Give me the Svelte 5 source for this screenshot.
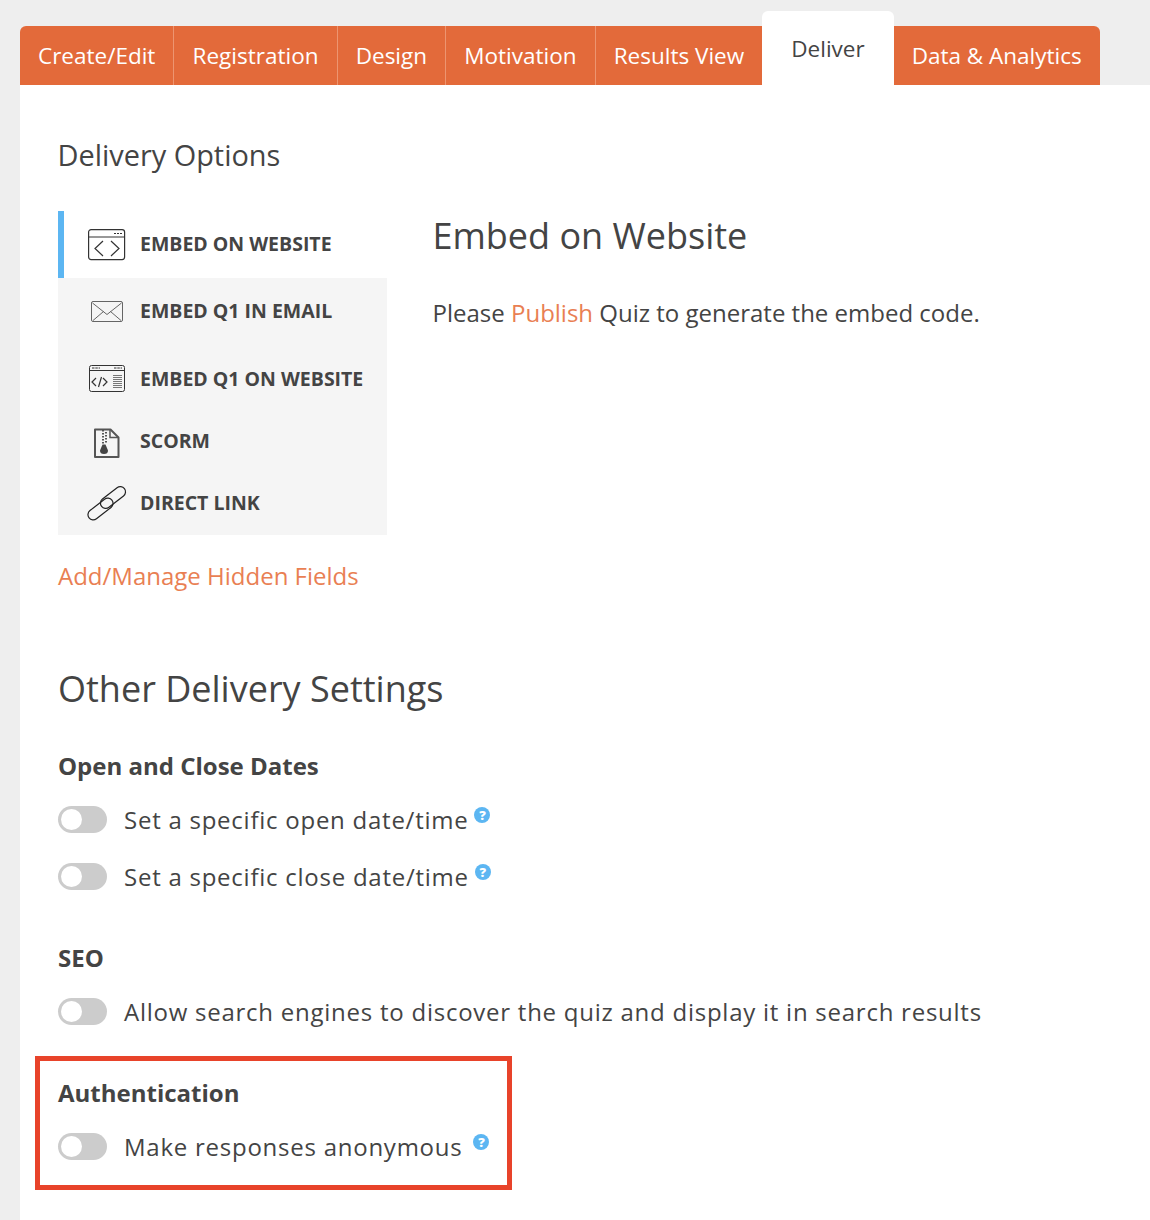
<script>
	const tabs = [
		{ label: 'Create/Edit' },
		{ label: 'Registration' },
		{ label: 'Design' },
		{ label: 'Motivation' },
		{ label: 'Results View' },
		{ label: 'Deliver', active: true },
		{ label: 'Data & Analytics' }
	];
</script>

<div class="page">
	<nav class="tabs">
		{#each tabs as tab}
			<div class="tab" class:active={tab.active}>{tab.label}</div>
		{/each}
	</nav>

	<main class="content">
		<h2 class="options-title">Delivery Options</h2>

		<div class="options">
			<div class="side">
				<ul class="menu">
					<li class="item selected">
						<span class="icon">
							<svg width="38" height="32" viewBox="0 0 38 32" fill="none" stroke="#333" stroke-width="1.2">
								<rect x="0.6" y="1.600" width="36" height="30" rx="2.500" />
								<path d="M0.600 9h36" />
								<path d="M26 5.500h9" stroke-dasharray="2 1" />
								<path d="M15 13l-8 7.500 8 7.500M23 13l8 7.500-8 7.500" />
							</svg>
						</span>
						Embed on Website
					</li>
					<li class="item second">
						<span class="icon">
							<svg width="38" height="32" viewBox="0 0 38 32" fill="none" stroke="#555" stroke-width="0.9">
								<rect x="3.500" y="6.500" width="31" height="20" rx="1.500" />
								<path d="M4.500 8l14.500 11.500L33.500 8M5 25.500l10.500-9M33 25.500l-10.500-9" />
							</svg>
						</span>
						Embed Q1 in Email
					</li>
					<li class="item third">
						<span class="icon">
							<svg width="38" height="32" viewBox="0 0 38 32" fill="none" stroke="#333" stroke-width="1">
								<rect x="1.500" y="3.500" width="35" height="26" rx="2" />
								<path d="M1.500 8.500h35" />
								<path d="M4 6h8M26 6h8" stroke-width="1.200" stroke-dasharray="2.500 0.800" />
								<path d="M8 16l-4 4 4 4M15 16l4 4-4 4M13.500 15l-3 10" stroke-width="1.200" />
								<path d="M25 13.500h9M25 15.500h9M25 17.500h9M25 19.500h9M25 21.500h9M25 23.500h9M25 25.500h9" stroke="#777" />
							</svg>
						</span>
						Embed Q1 on Website
					</li>
					<li class="item scorm">
						<span class="icon">
							<svg width="38" height="32" viewBox="0 0 38 32" fill="none" stroke="#555" stroke-width="2">
								<path d="M7 4.500h15.500l8 8v19.500H7z" stroke-linejoin="round" />
								<path d="M22 4.500v8h8.500" stroke-width="1.500" />
								<path d="M15 5v14" stroke-width="2" stroke-dasharray="1.500 1.500" />
								<path d="M18 7v12" stroke-width="2" stroke-dasharray="1.500 1.500" />
								<path d="M14.500 19.500h3l2.500 6a4 3.500 0 1 1-8 0z" fill="#444" stroke="none" />
							</svg>
						</span>
						Scorm
					</li>
					<li class="item link">
						<span class="icon">
							<svg width="38" height="32" viewBox="0 0 38 32" fill="none" stroke="#222" stroke-width="1.200">
								<rect x="-2" y="16.750" width="29" height="10.500" rx="5.250" transform="rotate(-38 12.500 22)" />
								<rect x="10.500" y="5.250" width="29" height="10.500" rx="5.250" transform="rotate(-38 25 10.500)" />
							</svg>
						</span>
						Direct Link
					</li>
				</ul>
				<a class="hidden-fields" href="#hidden">Add/Manage Hidden Fields</a>
			</div>

			<div class="panel">
				<h2>Embed on Website</h2>
				<p>Please <a href="#publish">Publish</a> Quiz to generate the embed code.</p>
			</div>
		</div>

		<h2 class="settings-title">Other Delivery Settings</h2>

		<section class="group dates">
			<h3>Open and Close Dates</h3>
			<div class="row">
				<span class="toggle"></span>
				<span class="label">Set a specific open date/time</span>
				<span class="help">?</span>
			</div>
			<div class="row">
				<span class="toggle"></span>
				<span class="label">Set a specific close date/time</span>
				<span class="help">?</span>
			</div>
		</section>

		<section class="group seo">
			<h3>SEO</h3>
			<div class="row">
				<span class="toggle"></span>
				<span class="label">Allow search engines to discover the quiz and display it in search results</span>
			</div>
		</section>

		<section class="group auth">
			<h3>Authentication</h3>
			<div class="row">
				<span class="toggle"></span>
				<span class="label">Make responses anonymous</span>
				<span class="help wide">?</span>
			</div>
		</section>
	</main>
</div>

<style>
	:global(body) {
		background: #eeeeee;
		font-family: 'Open Sans', sans-serif;
		color: #444;
	}

	.page {
		padding: 26px 0 0 20px;
	}

	.tabs {
		display: flex;
		height: 59px;
	}

	.tab {
		display: flex;
		align-items: center;
		padding: 0 18.1px 1px;
		background: #e36a3a;
		color: #fff;
		font-size: 22.500px;
		border-right: 1px solid #ed9570;
		white-space: nowrap;
	}

	.tab:first-child {
		padding-left: 18px;
		border-top-left-radius: 6px;
	}

	.tab:last-child {
		border-right: none;
		border-top-right-radius: 6px;
		padding-left: 18px;
	}

	.tab:nth-last-child(3) {
		border-right: none;
	}

	.tab.active {
		margin-top: -15px;
		padding: 0 29px;
		background: #fff;
		color: #444;
		border-right: none;
		border-radius: 6px 6px 0 0;
	}

	.content {
		background: #fff;
		padding: 52px 0 30px 38px;
		height: 1135px;
		box-sizing: border-box;
	}

	h2 {
		margin: 0;
		font-weight: 400;
	}

	.options-title {
		font-size: 28.900px;
		line-height: 36px;
		margin-left: -0.500px;
	}

	.options {
		display: flex;
		margin-top: 38px;
	}

	.side {
		width: 329px;
	}

	.menu {
		list-style: none;
		margin: 0;
		padding: 0;
		background: #f5f5f5;
	}

	.item {
		display: flex;
		align-items: center;
		height: 67px;
		padding-left: 30px;
		box-sizing: border-box;
		font-size: 19.500px;
		font-weight: 700;
		text-transform: uppercase;
		color: #444;
		white-space: nowrap;
	}

	.item.second {
		padding-bottom: 2px;
	}

	.item.third {
		height: 65px;
		padding-top: 1px;
	}

	.item.scorm {
		height: 61px;
	}

	.item.link {
		height: 64px;
		padding-bottom: 1px;
	}

	.item.selected {
		background: #fff;
		border-left: 6px solid #5cb6f2;
		padding-left: 24px;
		padding-bottom: 2px;
	}

	.icon {
		display: flex;
		width: 38px;
		margin-right: 14px;
	}

	.icon svg {
		overflow: visible;
	}

	.hidden-fields {
		display: block;
		margin-top: 24px;
		font-size: 24px;
		line-height: 33px;
		color: #e97f53;
		text-decoration: none;
	}

	.panel {
		margin-left: 45.5px;
	}

	.panel h2 {
		font-size: 36px;
		line-height: 50px;
	}

	.panel p {
		margin: 35px 0 0;
		font-size: 24px;
		line-height: 33px;
	}

	.panel a {
		color: #e97f53;
		text-decoration: none;
	}

	.settings-title {
		margin-top: 72px;
		font-size: 36px;
		line-height: 50px;
	}

	.group h3 {
		margin: 0 0 9px;
		font-size: 24px;
		line-height: 33px;
		font-weight: 700;
	}

	.dates {
		margin-top: 35px;
	}

	.seo {
		margin-top: 36px;
	}

	.auth {
		margin-top: 16px;
		width: 477px;
		margin-left: -23px;
		padding: 15px 0 0 18px;
		border: 5px solid #e8432a;
		box-sizing: border-box;
		height: 134px;
	}

	.row {
		display: flex;
		align-items: center;
		height: 57px;
	}

	.toggle {
		position: relative;
		width: 49px;
		height: 27px;
		border-radius: 14px;
		background: #ccc;
		flex: none;
	}

	.toggle::after {
		content: '';
		position: absolute;
		left: 3px;
		top: 3px;
		width: 21px;
		height: 21px;
		border-radius: 50%;
		background: #fff;
	}

	.label {
		margin-left: 17px;
		font-size: 24px;
		letter-spacing: 0.75px;
		white-space: nowrap;
	}

	.help {
		display: flex;
		align-items: center;
		justify-content: center;
		width: 16px;
		height: 16px;
		margin: -10px 0 0 6px;
		border-radius: 50%;
		background: #5cb6f2;
		color: #fff;
		font-size: 13px;
		font-weight: 800;
	}

	.help.wide {
		margin-left: 11px;
	}
</style>
